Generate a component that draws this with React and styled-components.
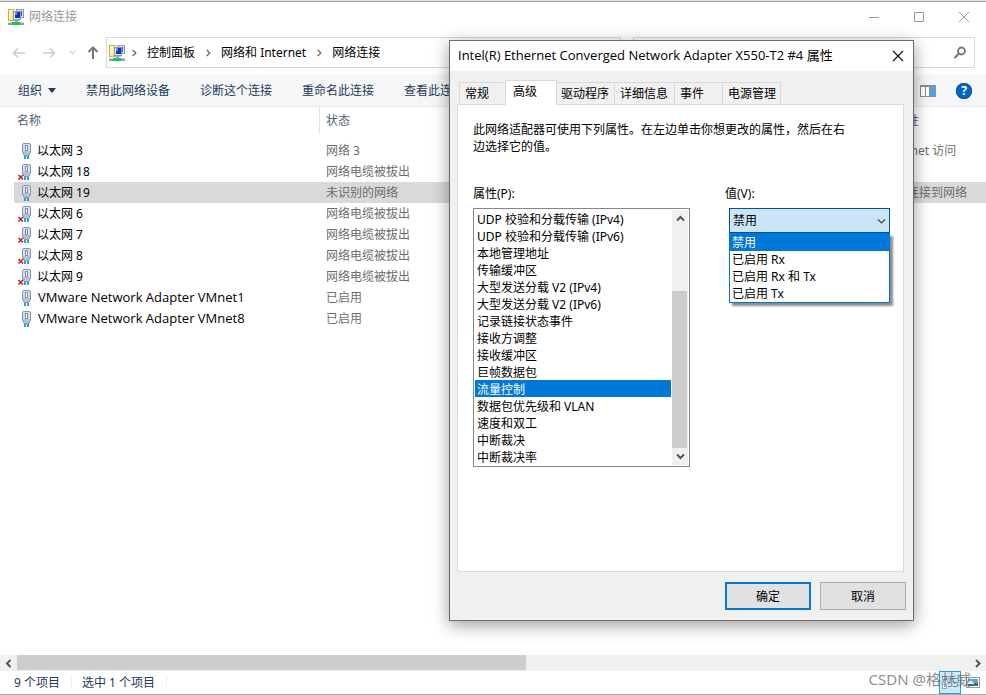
import { useState } from "react";
import styled, { createGlobalStyle } from "styled-components";

const adapters = [
    { name: '以太网 3', status: '网络 3', access: 'Internet 访问' },
    { name: '以太网 18', status: '网络电缆被拔出', unplugged: true },
    { name: '以太网 19', status: '未识别的网络', access: '无法连接到网络' },
    { name: '以太网 6', status: '网络电缆被拔出', unplugged: true },
    { name: '以太网 7', status: '网络电缆被拔出', unplugged: true },
    { name: '以太网 8', status: '网络电缆被拔出', unplugged: true },
    { name: '以太网 9', status: '网络电缆被拔出', unplugged: true },
    { name: 'VMware Network Adapter VMnet1', status: '已启用', latin: true },
    { name: 'VMware Network Adapter VMnet8', status: '已启用', latin: true },
];

const commands = ['禁用此网络设备', '诊断这个连接', '重命名此连接', '查看此连'];

const crumbs = ['控制面板', '网络和 Internet', '网络连接'];

const tabs = [
    { text: '常规', width: 47 },
    { text: '高级', width: 52 },
    { text: '驱动程序', width: 60 },
    { text: '详细信息', width: 61 },
    { text: '事件', width: 49 },
    { text: '电源管理', width: 59 },
];

const properties = [
    'UDP 校验和分载传输 (IPv4)',
    'UDP 校验和分载传输 (IPv6)',
    '本地管理地址',
    '传输缓冲区',
    '大型发送分载 V2 (IPv4)',
    '大型发送分载 V2 (IPv6)',
    '记录链接状态事件',
    '接收方调整',
    '接收缓冲区',
    '巨帧数据包',
    '流量控制',
    '数据包优先级和 VLAN',
    '速度和双工',
    '中断裁决',
    '中断裁决率',
];

const values = ['禁用', '已启用 Rx', '已启用 Rx 和 Tx', '已启用 Tx'];

const NetworkIcon = () => (
    <svg width="16" height="16" viewBox="0 0 16 16" shapeRendering="crispEdges" aria-hidden="true">
        <path fill="#d3b04c" d="M0 0h7v12H0z" />
        <path fill="#f8e27f" d="M1 1h6v10H1z" />
        <path fill="#fdf3b4" d="M1 1h3v9H1z" />
        <path fill="#93a0b0" d="M8 0h8v9H8z" />
        <path fill="#d5dde6" d="M9 1h6v7H9z" />
        <path fill="#4a63b8" d="M10 2h4v5h-4z" />
        <path fill="#8a97a6" d="M5 2h8v9H5z" />
        <path fill="#e4eaf0" d="M6 3h6v7H6z" />
        <path fill="#1230c8" d="M7 3h5v6H7z" />
        <path fill="#6c88ef" d="M7 3h2v3H7z" />
        <path fill="#a9b4bf" d="M6 11h6v1H6z" />
        <path fill="#8ea3a3" d="M0 13h16v3H0z" />
        <path fill="#c5d3d3" d="M0 13h16v1H0z" />
        <path fill="#12c168" d="M4 13h8v3H4z" />
        <path fill="#2bd37e" d="M7 12h3v2H7z" />
    </svg>
);

const AdapterIcon = ({ unplugged }) => (
    <svg width="16" height="18" viewBox="0 0 16 18" aria-hidden="true">
        <g shapeRendering="crispEdges">
            <path fill="#22a4d9" d="M7 13h2v4H7zM10 13h2v4h-2z" />
            <path fill="#8697ac" d="M6 1h7v1h-7zM5 2h1v9H5zM13 2h1v9h-1zM6 11h1v2H6zM12 11h1v2h-1zM7 13h5v1H7z" />
            <path fill="#d3dfea" d="M6 2h7v9H6z" />
            <path fill="#aec3d6" d="M6 9h7v2H6zM7 11h5v2H7z" />
            <path fill="#7f92a8" d="M8 3h3v6H8z" />
            <path fill="#fff" d="M9 4h1v4H9z" />
        </g>
        {unplugged && <path stroke="#d3222c" strokeWidth="1.700" d="M1.500 12l4.500 4.500M6 12l-4.500 4.500" />}
    </svg>
);

const Chevron = ({ d, color = '#555', size = 9, weight = 1.5 }) => (
    <svg width={size} height={size} viewBox="0 0 9 9" aria-hidden="true">
        <path fill="none" stroke={color} strokeWidth={weight} d={d} />
    </svg>
);

const UP = 'M1 6.500L4.500 3 8 6.500';
const DOWN = 'M1 2.500L4.500 6 8 2.500';
const LEFT = 'M6.500 1L3 4.500 6.500 8';
const RIGHT = 'M3 1l3.500 3.500L3 8';

const Arrow = ({ flip, up, color }) => (
    <svg width="14" height="14" viewBox="0 0 14 14" aria-hidden="true">
        <g fill="none" stroke={color} strokeWidth={up ? 2 : 1.5} transform={up ? 'rotate(90 7 7)' : flip ? 'rotate(180 7 7)' : undefined}>
            <path d="M1.500 7H13M6 2.500L1.500 7 6 11.500" />
        </g>
    </svg>
);

export default function App() {
    const [selected, setSelected] = useState('以太网 19');
    const [tab, setTab] = useState('高级');
    const [property, setProperty] = useState('流量控制');
    const [value, setValue] = useState('禁用');

    return (
        <>
            <GlobalStyle />
            <Explorer>
                <TitleBar>
                    <NetworkIcon />
                    <WindowTitle>网络连接</WindowTitle>
                    <Caption aria-label="最小化">
                        <svg width="12" height="12"><path stroke="#999" d="M1 6.500h10" /></svg>
                    </Caption>
                    <Caption aria-label="最大化">
                        <svg width="12" height="12"><path fill="none" stroke="#999" d="M1.500 1.500h9v9h-9z" /></svg>
                    </Caption>
                    <Caption aria-label="关闭">
                        <svg width="12" height="12"><path stroke="#999" d="M1 1l10 10M11 1L1 11" /></svg>
                    </Caption>
                </TitleBar>

                <NavBar>
                    <NavButton aria-label="后退" $width={30}><Arrow color="#ccc" /></NavButton>
                    <NavButton aria-label="前进" $width={30}><Arrow color="#ccc" flip /></NavButton>
                    <NavButton aria-label="最近的位置" $width={16}><Chevron d={DOWN} color="#ccc" size={7} /></NavButton>
                    <NavButton aria-label="向上" $width={26}><Arrow color="#777" up /></NavButton>
                    <AddressBox>
                        <NetworkIcon />
                        {crumbs.map(crumb => (
                            <Crumb key={crumb}>
                                <Chevron d={RIGHT} color="#666" size={8} />
                                <CrumbLink href="#">{crumb}</CrumbLink>
                            </Crumb>
                        ))}
                    </AddressBox>
                    <SearchBox>
                        <SearchInput aria-label="搜索" />
                        <svg width="14" height="14" viewBox="0 0 14 14" aria-hidden="true">
                            <circle cx="8.500" cy="5" r="3.500" fill="none" stroke="#777" strokeWidth="1.800" />
                            <path stroke="#777" strokeWidth="2.200" d="M6 7.500L1.500 12" />
                        </svg>
                    </SearchBox>
                </NavBar>

                <CommandBar>
                    <Command>
                        组织
                        <svg width="8" height="5" aria-hidden="true"><path fill="#1e395b" d="M0 0h8L4 5z" /></svg>
                    </Command>
                    {commands.map(command => <Command key={command}>{command}</Command>)}
                    <CommandIcons>
                        <IconButton aria-label="预览窗格">
                            <svg width="16" height="12" shapeRendering="crispEdges">
                                <path fill="#8a8f94" d="M0 0h16v12H0z" />
                                <path fill="#fff" d="M1 2h4v9H1zM6 2h3v9H6z" />
                                <path fill="#47a4e8" d="M10 2h5v9h-5z" />
                            </svg>
                        </IconButton>
                        <HelpButton aria-label="帮助">?</HelpButton>
                    </CommandIcons>
                </CommandBar>

                <ListArea>
                    <AdapterTable>
                        <colgroup>
                            <col width="306" />
                            <col width="177" />
                            <col width="380" />
                            <col />
                        </colgroup>
                        <thead>
                            <tr>
                                <HeadCell $first>名称</HeadCell>
                                <HeadCell>状态</HeadCell>
                                <HeadCell />
                                <HeadCell>连接性</HeadCell>
                            </tr>
                        </thead>
                        <tbody>
                            {adapters.map(item => (
                                <AdapterRow
                                    key={item.name}
                                    $selected={item.name === selected}
                                    onClick={() => setSelected(item.name)}
                                >
                                    <NameCell>
                                        <NameContent $latin={item.latin}>
                                            <AdapterIcon unplugged={item.unplugged} />
                                            {item.name}
                                        </NameContent>
                                    </NameCell>
                                    <Cell>{item.status}</Cell>
                                    <Cell />
                                    <Cell>{item.access}</Cell>
                                </AdapterRow>
                            ))}
                        </tbody>
                    </AdapterTable>
                </ListArea>

                <HScroll>
                    <HScrollButton aria-label="向左滚动"><Chevron d={LEFT} weight={2} /></HScrollButton>
                    <HTrack><HThumb /></HTrack>
                    <HScrollButton aria-label="向右滚动"><Chevron d={RIGHT} weight={2} /></HScrollButton>
                </HScroll>

                <StatusBar>
                    <StatusItem>9 个项目</StatusItem>
                    <StatusItem>选中 1 个项目</StatusItem>
                    <ViewButtons>
                        <ViewButton aria-label="详细信息" $active>
                            <svg width="16" height="14" shapeRendering="crispEdges">
                                <path fill="#fff" stroke="#9aa7b2" d="M.5.500h4v3h-4zM.5 8.500h4v4h-4z" />
                                <path fill="#d33" d="M2 10h1v1H2z" />
                                <path stroke="#7a8791" d="M6 2.500h3M11 2.500h4M6 6.500h3M11 6.500h4M6 10.500h3M11 10.500h4" />
                            </svg>
                        </ViewButton>
                        <ViewButton aria-label="大缩略图">
                            <svg width="14" height="11" shapeRendering="crispEdges">
                                <path fill="#fff" stroke="#9a9a9a" d="M.5.500h13v10H.5z" />
                                <path fill="#5b9fe6" d="M2 2h10v4H2z" />
                                <path fill="#cfe5f7" d="M2 4h5v2H2z" />
                                <path fill="#39706f" d="M2 7h10v2H2zM8 6h4v1H8z" />
                            </svg>
                        </ViewButton>
                    </ViewButtons>
                    <Watermark>CSDN @格林威</Watermark>
                </StatusBar>

                <Dialog role="dialog" aria-labelledby="dialog-title">
                    <DialogHeader>
                        <DialogTitle id="dialog-title">Intel(R) Ethernet Converged Network Adapter X550-T2 #4 属性</DialogTitle>
                        <DialogClose aria-label="关闭">
                            <svg width="12" height="12"><path stroke="#111" strokeWidth="1.200" d="M1 1l10 10M11 1L1 11" /></svg>
                        </DialogClose>
                    </DialogHeader>
                    <DialogBody>
                        <TabList role="tablist">
                            {tabs.map(item => (
                                <Tab
                                    key={item.text}
                                    role="tab"
                                    aria-selected={item.text === tab}
                                    $width={item.width}
                                    $active={item.text === tab}
                                    onClick={() => setTab(item.text)}
                                >
                                    {item.text}
                                </Tab>
                            ))}
                        </TabList>
                        <Panel role="tabpanel">
                            <Description>
                                此网络适配器可使用下列属性。在左边单击你想更改的属性，然后在右边选择它的值。
                            </Description>
                            <Fields>
                                <PropertyField>
                                    <Label htmlFor="property">属性(P):</Label>
                                    <ListFrame>
                                        <PropertyList
                                            id="property"
                                            size={properties.length}
                                            value={property}
                                            onChange={e => setProperty(e.target.value)}
                                        >
                                            {properties.map(item => <option key={item}>{item}</option>)}
                                        </PropertyList>
                                        <VScroll>
                                            <VScrollButton aria-label="向上滚动"><Chevron d={UP} weight={2} /></VScrollButton>
                                            <VTrack><VThumb /></VTrack>
                                            <VScrollButton aria-label="向下滚动"><Chevron d={DOWN} weight={2} /></VScrollButton>
                                        </VScroll>
                                    </ListFrame>
                                </PropertyField>
                                <ValueField>
                                    <Label htmlFor="value">值(V):</Label>
                                    <Combo>
                                        <ComboSelect id="value" value={value} onChange={e => setValue(e.target.value)}>
                                            {values.map(item => <option key={item}>{item}</option>)}
                                        </ComboSelect>
                                        <ComboArrow><Chevron d={DOWN} color="#444" weight={1.2} /></ComboArrow>
                                        <Popup role="listbox" aria-label="值">
                                            {values.map(item => (
                                                <PopupItem
                                                    key={item}
                                                    role="option"
                                                    aria-selected={item === value}
                                                    $active={item === value}
                                                    onClick={() => setValue(item)}
                                                >
                                                    {item}
                                                </PopupItem>
                                            ))}
                                        </Popup>
                                    </Combo>
                                </ValueField>
                            </Fields>
                        </Panel>
                        <DialogFooter>
                            <PushButton $primary>确定</PushButton>
                            <PushButton>取消</PushButton>
                        </DialogFooter>
                    </DialogBody>
                </Dialog>
            </Explorer>
        </>
    );
}

const GlobalStyle = createGlobalStyle`
    * {
        box-sizing: border-box;
    }
    body {
        margin: 0;
        background: #fff;
    }
    body, button, input, select {
        font-family: "Noto Sans", "Noto Sans CJK SC", sans-serif;
        font-size: 12px;
        line-height: 17px;
    }
    button {
        padding: 0;
        border: 0;
        background: none;
        color: inherit;
    }
    svg {
        display: block;
        flex: none;
    }
`

const Explorer = styled.div`
    position: relative;
    display: flex;
    flex-direction: column;
    min-height: 100vh;
    padding-top: 1px;
    overflow: hidden;
    border-top: 1px solid #e3e3e3;
    border-bottom: 1px solid #a9a9a9;
    background: #fff;
    box-shadow: inset 0 1px #9f9f9f;
`

const TitleBar = styled.header`
    display: flex;
    align-items: center;
    height: 29px;
    padding-left: 8px;
`

const WindowTitle = styled.span`
    flex: 1;
    padding-left: 5px;
    color: #999;
`

const Caption = styled.button`
    display: grid;
    place-items: center;
    width: 45px;
    height: 29px;
`

const NavBar = styled.nav`
    display: flex;
    align-items: center;
    height: 44px;
    padding: 0 11px 1px 4px;
`

const NavButton = styled.button`
    display: grid;
    flex: none;
    place-items: center;
    width: ${props => props.$width}px;
    height: 24px;
`

const AddressBox = styled.div`
    display: flex;
    flex: 519;
    align-items: center;
    height: 31px;
    margin-right: 12px;
    padding-left: 2px;
    border: 1px solid #d9d9d9;
`

const Crumb = styled.span`
    display: flex;
    align-items: center;
    gap: 9px;
    padding-left: 5px;
`

const CrumbLink = styled.a`
    padding-right: 4px;
    color: #000;
    text-decoration: none;
    white-space: nowrap;
`

const SearchBox = styled.div`
    display: flex;
    flex: 338;
    align-items: center;
    height: 31px;
    padding-right: 7px;
    border: 1px solid #d9d9d9;
`

const SearchInput = styled.input`
    flex: 1;
    min-width: 0;
    border: 0;
    outline: 0;
    background: transparent;
`

const CommandBar = styled.div`
    display: flex;
    align-items: center;
    gap: 30px;
    height: 32px;
    padding: 0 14px 0 18px;
    border-bottom: 1px solid #e6e8eb;
    background: #f5f6f7;
    color: #1e395b;
    white-space: nowrap;
`

const Command = styled.button`
    display: flex;
    align-items: center;
    gap: 6px;
`

const CommandIcons = styled.div`
    display: flex;
    align-items: center;
    gap: 20px;
    margin-left: auto;
`

const IconButton = styled.button`
    display: grid;
    place-items: center;
`

const HelpButton = styled.button`
    width: 16px;
    height: 16px;
    border-radius: 50%;
    background: #0067d0;
    box-shadow: inset 0 0 0 1px #1c5088;
    color: #fff;
    font-weight: 700;
    line-height: 16px;
`

const ListArea = styled.main`
    flex: 1;
    padding-left: 14px;
    overflow: hidden;
`

const AdapterTable = styled.table`
    width: 100%;
    border-spacing: 0;
    table-layout: fixed;
    white-space: nowrap;
`

const HeadCell = styled.th`
    height: 33px;
    padding: 0 0 6px ${props => (props.$first ? '3px' : '6px')};
    border: 0;
    background: ${props => (props.$first ? 'linear-gradient(#e2e2e2, #e2e2e2) right top / 1px 27px no-repeat' : 'none')};
    color: #4c607a;
    font-weight: 400;
    text-align: left;
`

const AdapterRow = styled.tr`
    background: ${props => (props.$selected ? '#d9d9d9' : 'transparent')};
`

const Cell = styled.td`
    height: 21px;
    padding: 0 0 0 6px;
    color: #6d6d6d;
`

const NameCell = styled(Cell)`
    padding-left: 3px;
    color: #000;
`

const NameContent = styled.div`
    display: flex;
    align-items: center;
    gap: ${props => (props.$latin ? '5px' : '4px')};
    height: 21px;
    font-family: ${props => (props.$latin ? '"Open Sans", sans-serif' : 'inherit')};
    font-size: ${props => (props.$latin ? '13px' : '12px')};
`

const HScroll = styled.div`
    display: flex;
    height: 16px;
    background: #f0f0f0;
`

const HScrollButton = styled.button`
    display: grid;
    place-items: center;
    width: 17px;
`

const HTrack = styled.div`
    flex: 1;
`

const HThumb = styled.div`
    width: 53.5%;
    height: 15px;
    background: #cdcdcd;
`

const StatusBar = styled.footer`
    position: relative;
    display: flex;
    align-items: center;
    height: 23px;
    padding: 0 3px 0 14px;
    color: #1e395b;
`

const StatusItem = styled.span`
    margin-right: 10px;
    padding-right: 11px;
    border-right: 1px solid #f0f0f0;
    line-height: 12px;
`

const ViewButtons = styled.div`
    display: flex;
    align-items: center;
    gap: 2px;
    margin-left: auto;
`

const ViewButton = styled.button`
    display: grid;
    place-items: center;
    width: ${props => (props.$active ? '22px' : '20px')};
    height: 23px;
    border: 1px solid ${props => (props.$active ? '#26a0da' : 'transparent')};
    background: ${props => (props.$active ? '#cbe8f6' : 'transparent')};
`

const Watermark = styled.span`
    position: absolute;
    right: 15px;
    bottom: 5px;
    color: rgba(90, 90, 90, 0.7);
    font-size: 15px;
    line-height: 20px;
    pointer-events: none;
`

const Dialog = styled.section`
    position: absolute;
    top: 39px;
    right: 72px;
    width: 465px;
    border: 1px solid #6b6b6b;
    background: #f0f0f0;
    box-shadow: 0 4px 16px rgba(0, 0, 0, 0.4);
    color: #000;
`

const DialogHeader = styled.header`
    display: flex;
    align-items: center;
    height: 30px;
    padding-left: 8px;
    background: #fff;
`

const DialogTitle = styled.h1`
    flex: 1;
    margin: 0;
    padding-bottom: 2px;
    font-family: "Open Sans", "Noto Sans CJK SC", sans-serif;
    font-size: 13px;
    font-weight: 400;
    white-space: nowrap;
`

const DialogClose = styled.button`
    display: grid;
    place-items: center;
    width: 30px;
    height: 30px;
`

const DialogBody = styled.div`
    padding: 9px 7px 10px;
`

const TabList = styled.div`
    display: flex;
    align-items: flex-end;
    height: 25px;
    margin-bottom: -1px;
    padding-left: 2px;
`

const Tab = styled.button`
    position: relative;
    flex: none;
    width: ${props => props.$width}px;
    height: ${props => (props.$active ? '25px' : '23px')};
    margin-right: ${props => (props.$active ? '-2px' : '-1px')};
    padding: ${props => (props.$active ? '0 0 3px 7px' : '0 0 0 5px')};
    border: 1px solid #d9d9d9;
    border-bottom-color: ${props => (props.$active ? '#fff' : '#d9d9d9')};
    background: ${props => (props.$active ? '#fff' : '#f0f0f0')};
    text-align: left;
    white-space: nowrap;
    z-index: ${props => (props.$active ? 1 : 0)};
`

const Panel = styled.div`
    height: 468px;
    margin-right: 2px;
    padding: 16px 13px 0 15px;
    border: 1px solid #d9d9d9;
    background: #fff;
`

const Description = styled.p`
    max-width: 376px;
    margin: 0 0 30px;
`

const Fields = styled.div`
    display: flex;
    justify-content: space-between;
`

const PropertyField = styled.div`
    width: 217px;
`

const ValueField = styled.div`
    width: 165px;
`

const Label = styled.label`
    display: block;
    margin-bottom: 6px;
`

const ListFrame = styled.div`
    display: flex;
    padding: 1px;
    border: 1px solid #828790;
`

const PropertyList = styled.select`
    flex: 1;
    height: 255px;
    margin-right: 1px;
    padding: 0;
    border: 0;
    border-radius: 0;
    outline: 0;
    overflow: hidden;
    background: #fff;
    scrollbar-width: none;

    option {
        min-height: 17px;
        height: 17px;
        padding: 0 2px 2px;
        color: #000;
        line-height: 15px;
    }
    option:checked {
        background: linear-gradient(#0078d7, #0078d7);
        color: #fff;
    }
`

const VScroll = styled.div`
    display: flex;
    flex-direction: column;
    width: 16px;
    background: #f0f0f0;
`

const VScrollButton = styled.button`
    display: grid;
    place-items: center;
    height: 17px;
`

const VTrack = styled.div`
    display: flex;
    flex: 1;
    flex-direction: column;
    justify-content: flex-end;
`

const VThumb = styled.div`
    width: 15px;
    height: 71%;
    background: #cdcdcd;
`

const Combo = styled.div`
    position: relative;
    margin-left: 4px;
`

const ComboSelect = styled.select`
    display: block;
    width: 100%;
    height: 25px;
    padding: 0 3px;
    border: 1px solid #005499;
    border-radius: 0;
    outline: 0;
    appearance: none;
    background: #cce4f7;
    color: #000;
`

const ComboArrow = styled.span`
    position: absolute;
    top: 9px;
    right: 4px;
    pointer-events: none;
`

const Popup = styled.ul`
    position: absolute;
    top: 25px;
    left: 0;
    right: 0;
    margin: 0;
    padding: 0;
    border: 1px solid #0078d7;
    background: #fff;
    box-shadow: 3px 3px 2px rgba(0, 0, 0, 0.45);
    list-style: none;
`

const PopupItem = styled.li`
    height: 17px;
    padding-left: 2px;
    background: ${props => (props.$active ? '#0078d7' : '#fff')};
    color: ${props => (props.$active ? '#fff' : '#000')};
`

const DialogFooter = styled.footer`
    display: flex;
    justify-content: flex-end;
    gap: 9px;
    padding-top: 10px;
`

const PushButton = styled.button`
    width: 86px;
    height: 28px;
    border: ${props => (props.$primary ? '2px solid #0078d7' : '1px solid #adadad')};
    background: #e1e1e1;
`
